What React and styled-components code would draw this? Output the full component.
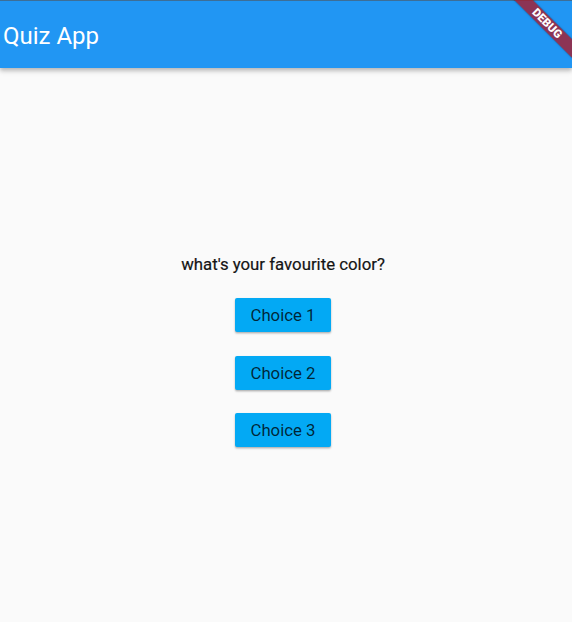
import React from 'react';
import styled, { createGlobalStyle } from 'styled-components';

const GlobalStyle = createGlobalStyle`
  html, body {
    margin: 0;
    padding: 0;
    background: #fafafa;
  }
  body {
    font-family: Roboto, "Liberation Sans", sans-serif;
  }
`;

const Screen = styled.div`
  position: relative;
  width: 572px;
  height: 622px;
  overflow: hidden;
  display: flex;
  flex-direction: column;
  background: #fafafa;
`;

const AppBar = styled.header`
  position: relative;
  z-index: 1;
  height: 67px;
  flex-shrink: 0;
  display: flex;
  align-items: center;
  padding: 0 3px;
  background: #2196f3;
  border-top: 1px solid #3d6e96;
  box-shadow: 0 2px 4px rgba(0, 0, 0, 0.2), 0 4px 5px rgba(0, 0, 0, 0.1);
`;

const Title = styled.h1`
  margin: 2px 0 0;
  font-size: 24px;
  font-weight: 400;
  color: #fff;
`;

const Body = styled.main`
  flex: 1;
  display: flex;
  flex-direction: column;
  align-items: center;
  justify-content: center;
  padding: 12px 6px 0 0;
`;

const Question = styled.p`
  margin: 0 0 24px;
  font-size: 16.8px;
  font-weight: 400;
  line-height: 19px;
  color: #141414;
  -webkit-text-stroke: 0.2px #141414;
`;

const ChoiceButton = styled.button`
  height: 34px;
  margin-bottom: 23.5px;
  padding: 0 15px;
  border: none;
  border-radius: 2px;
  background: #03a9f4;
  color: rgba(0, 0, 0, 0.78);
  font-family: Roboto, "Liberation Sans", sans-serif;
  font-size: 16.8px;
  cursor: pointer;
  box-shadow: 0 1px 2px rgba(0, 0, 0, 0.22), 0 2px 2px rgba(0, 0, 0, 0.1);
  &:last-child {
    margin-bottom: 0;
  }
`;

const DebugRibbon = styled.div`
  position: absolute;
  z-index: 5;
  top: 17px;
  right: -17px;
  width: 84px;
  height: 13px;
  transform: rotate(45deg);
  background: rgba(170, 24, 40, 0.78);
  box-shadow: 0 0 2px rgba(0, 0, 0, 0.4);
  color: #fff;
  font-family: Roboto, "Liberation Sans", sans-serif;
  font-size: 11.5px;
  font-weight: 900;
  line-height: 13px;
  text-align: center;
`;

const choices = ['Choice 1', 'Choice 2', 'Choice 3'];

export default function App() {
  return (
    <>
      <GlobalStyle />
      <Screen>
        <AppBar>
          <Title>Quiz App</Title>
        </AppBar>
        <Body>
          <Question>what's your favourite color?</Question>
          {choices.map((c) => (
            <ChoiceButton key={c}>{c}</ChoiceButton>
          ))}
        </Body>
        <DebugRibbon>DEBUG</DebugRibbon>
      </Screen>
    </>
  );
}
